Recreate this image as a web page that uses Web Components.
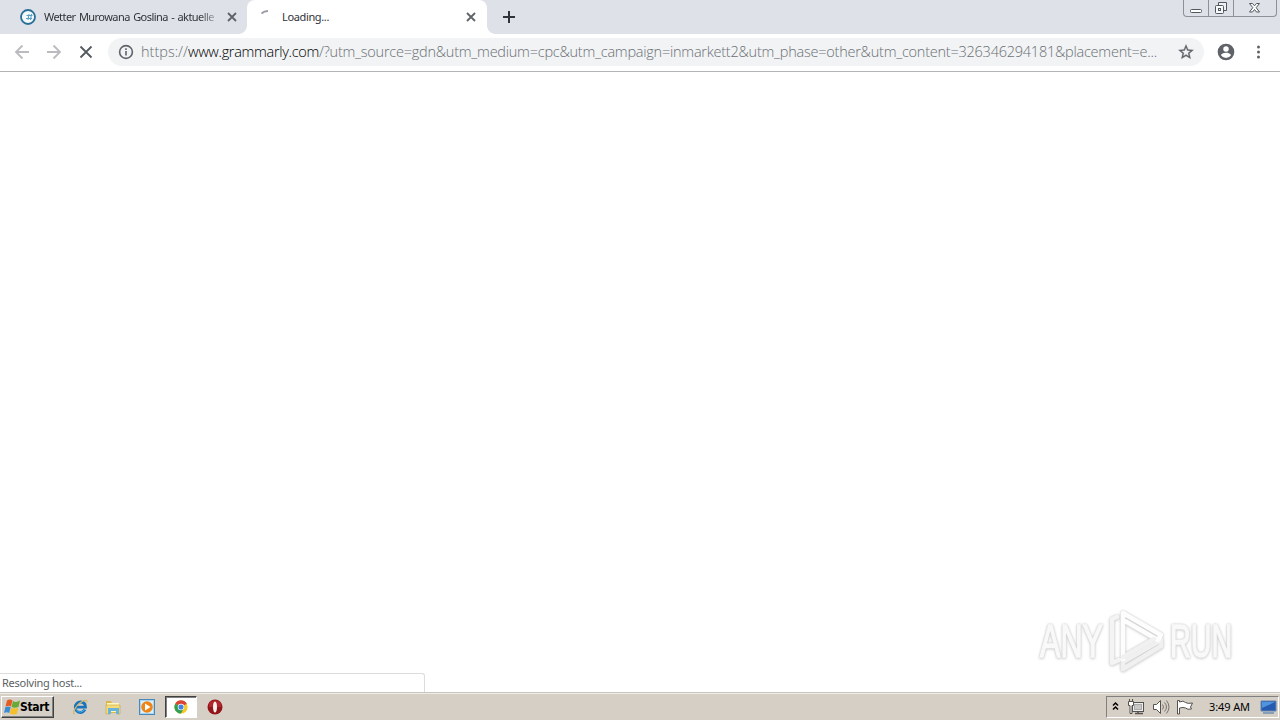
<!DOCTYPE html>
<html lang="en">
<head>
<meta charset="utf-8">
<title>Loading...</title>
<style>
    html, body {
        margin: 0;
        height: 100%;
        overflow: hidden;
        background: #fff;
        font-family: "Noto Sans", "DejaVu Sans Condensed", sans-serif;
    }
</style>
</head>
<body>
<desktop-screen>
    <tab-strip slot="browser"></tab-strip>
    <tool-bar slot="browser"></tool-bar>
    <page-view slot="browser"></page-view>
    <task-bar slot="taskbar"></task-bar>
</desktop-screen>

<script>
// small helper: every element gets an open shadow root with its own markup
class BaseElement extends HTMLElement {
    constructor() {
        super();
        this.attachShadow({ mode: 'open' });
        this.shadowRoot.innerHTML = this.render();
    }
}

// one line of text, spaced so that it takes exactly `width` pixels
class FitText extends BaseElement {
    render() {
        return `
            <style>
                :host { display: block; flex: none; white-space: nowrap; }
                span { display: block; width: max-content; }
            </style>
            <span><slot></slot></span>
        `;
    }

    connectedCallback() {
        const width = Number(this.getAttribute('width'));
        const span = this.shadowRoot.querySelector('span');
        const natural = span.getBoundingClientRect().width;
        this.style.width = width + 'px';
        span.style.letterSpacing = (width - natural) / this.textContent.length + 'px';
    }
}

class DesktopScreen extends BaseElement {
    render() {
        return `
            <style>
                :host { display: flex; flex-direction: column; width: 1280px; height: 720px; }
                main { display: flex; flex-direction: column; flex: 1; min-height: 0; }
            </style>
            <main><slot name="browser"></slot></main>
            <slot name="taskbar"></slot>
        `;
    }
}

class BrowserTab extends BaseElement {
    render() {
        return `
            <style>
                :host {
                    display: flex;
                    align-items: center;
                    box-sizing: border-box;
                    width: 240px;
                    height: 34px;
                    padding: 0 9px 0 13px;
                    font-size: 11px;
                    word-spacing: 1px;
                    color: #303338;
                }
                :host([active]) {
                    position: relative;
                    padding-right: 10px;
                    background: #fff;
                    border-radius: 8px 8px 0 0;
                }
                :host([active])::before, :host([active])::after {
                    content: "";
                    position: absolute;
                    bottom: 0;
                    width: 8px;
                    height: 8px;
                }
                :host([active])::before {
                    left: -8px;
                    background: radial-gradient(circle at 0 0, transparent 7.5px, #fff 8px);
                }
                :host([active])::after {
                    right: -8px;
                    background: radial-gradient(circle at 100% 0, transparent 7.5px, #fff 8px);
                }
                .icon { display: flex; width: 16px; height: 16px; margin-right: 8px; }
                :host([active]) .icon { margin-right: 6px; }
                .title { flex: 1; overflow: hidden; line-height: 16px; }
                :host(:not([active])) .title { -webkit-mask: linear-gradient(90deg, #000 155px, transparent 178px); }
                svg { display: block; flex: none; }
            </style>
            <div class="icon"><slot name="icon"></slot></div>
            <div class="title"><slot></slot></div>
            <svg width="12" height="12" viewBox="0 0 12 12"><path d="M2 2l8 8M10 2l-8 8" stroke="#5f6368" stroke-width="1.8"/></svg>
        `;
    }
}

class WindowButtons extends BaseElement {
    render() {
        return `
            <style>
                :host {
                    display: flex;
                    box-sizing: border-box;
                    width: 94px;
                    height: 17px;
                    margin-right: 3px;
                    border: 1px solid #8c9097;
                    border-top: 0;
                    border-radius: 0 0 4px 4px;
                }
                svg { display: block; }
            </style>
            <svg width="92" height="16" viewBox="0 0 92 16" fill="none" stroke="#53575e">
                <path d="M24.5 0v16M49.5 0v16" stroke="#8c9097"/>
                <rect x="6.5" y="9.5" width="11" height="3" rx="1" fill="#fff"/>
                <path d="M34.5 5V2.5h8v8h-2.5" fill="#eef0f3"/>
                <rect x="31.5" y="5.5" width="8" height="8" rx="1" fill="#f7f8fa"/>
                <rect x="34.5" y="8.5" width="2" height="2"/>
                <path d="M65.5 3.5h3l2 2.3 2-2.3h3l-3.3 4.2 3.3 4.3h-3l-2-2.5-2 2.5h-3l3.3-4.3z" fill="#fff"/>
            </svg>
        `;
    }
}

class TabStrip extends BaseElement {
    render() {
        return `
            <style>
                :host { display: flex; height: 34px; background: #dee1e7; }
                .tabs { display: flex; flex: 1; padding-left: 7px; }
                .new { margin: 10px 0 0 15px; }
                svg { display: block; }
            </style>
            <div class="tabs">
                <browser-tab>
                    <svg slot="icon" width="16" height="16" viewBox="0 0 16 16" fill="none">
                        <circle cx="8" cy="8" r="7" fill="#f3f8fb" stroke="#286f98" stroke-width="1.8"/>
                        <path d="M6.5 6.5h6M6 9.5h6M9 5l-1 6M11.5 5l-1 6" stroke="#579fc0"/>
                    </svg>
                    <fit-text width="170">Wetter Murowana Goslina - aktuelle</fit-text>
                </browser-tab>
                <browser-tab active>
                    <svg slot="icon" width="16" height="16" viewBox="0 0 16 16" fill="none">
                        <path d="M1.5 4.5Q4 2 8 2" stroke="#999da1" stroke-width="1.8"/>
                    </svg>
                    <fit-text width="47">Loading...</fit-text>
                </browser-tab>
                <svg class="new" width="14" height="14" viewBox="0 0 14 14"><path d="M7 1v12M1 7h12" stroke="#30343a" stroke-width="2"/></svg>
            </div>
            <window-buttons></window-buttons>
        `;
    }
}

class ToolBar extends BaseElement {
    render() {
        return `
            <style>
                :host {
                    display: flex;
                    align-items: center;
                    box-sizing: border-box;
                    height: 38px;
                    padding: 0 12px 1px 12px;
                    border-bottom: 1px solid #b3b4b5;
                    background: #fff;
                }
                svg { display: block; flex: none; }
                .nav { display: flex; gap: 12px; margin-right: 12px; }
                .omnibox {
                    display: flex;
                    align-items: center;
                    box-sizing: border-box;
                    width: 1096px;
                    height: 28px;
                    padding: 0 9px 0 9px;
                    border-radius: 14px;
                    background: #f1f3f4;
                }
                .url {
                    display: flex;
                    flex: 1;
                    margin-left: 6px;
                    font: 300 14.5px/22px "Open Sans", "Noto Sans", sans-serif;
                    color: #6b6f74;
                }
                .host { color: #000; }
                .user { margin-left: 12px; }
                .menu { margin-left: 14px; }
            </style>
            <div class="nav">
                <svg width="20" height="20" viewBox="0 0 20 20" fill="none" stroke="#b9bbbe" stroke-width="1.8"><path d="M17 10H4M10.5 3.5L4 10l6.5 6.5"/></svg>
                <svg width="20" height="20" viewBox="0 0 20 20" fill="none" stroke="#b9bbbe" stroke-width="1.8"><path d="M3 10h13M9.5 3.5L16 10l-6.5 6.5"/></svg>
                <svg width="20" height="20" viewBox="0 0 20 20" fill="none" stroke="#55595e" stroke-width="1.8"><path d="M4.5 4.5l11 11M15.5 4.5l-11 11"/></svg>
            </div>
            <div class="omnibox">
                <svg width="18" height="18" viewBox="0 0 18 18" fill="none" stroke="#5f6368" stroke-width="1.6"><circle cx="9" cy="9" r="6.4"/><path d="M9 8v4.5M9 5.3v1.7"/></svg>
                <div class="url">
                    <fit-text width="47">https://</fit-text>
                    <fit-text class="host" width="131">www.grammarly.com</fit-text>
                    <fit-text width="838">/?utm_source=gdn&amp;utm_medium=cpc&amp;utm_campaign=inmarkett2&amp;utm_phase=other&amp;utm_content=326346294181&amp;placement=e...</fit-text>
                </div>
                <svg width="18" height="18" viewBox="0 0 24 24" fill="#5f6368" stroke="#5f6368" stroke-width=".4"><path d="M22 9.24l-7.19-.62L12 2 9.19 8.63 2 9.24l5.46 4.73L5.82 21 12 17.27 18.18 21l-1.63-7.03L22 9.24zM12 15.4l-3.76 2.27 1-4.28-3.32-2.88 4.38-.38L12 6.1l1.71 4.04 4.38.38-3.32 2.88 1 4.28L12 15.4z"/></svg>
            </div>
            <svg class="user" width="20" height="20" viewBox="0 0 24 24" fill="#5f6368"><path d="M12 2a10 10 0 100 20 10 10 0 000-20zm0 3a3.3 3.3 0 110 6.6A3.3 3.3 0 0112 5zm0 14.2a7.2 7.2 0 01-6-3.22c.03-1.99 4-3.08 6-3.08s5.97 1.09 6 3.08a7.2 7.2 0 01-6 3.22z"/></svg>
            <svg class="menu" width="18" height="18" viewBox="0 0 18 18" fill="#5f6368"><circle cx="8.5" cy="4" r="1.5"/><circle cx="8.5" cy="9" r="1.5"/><circle cx="8.5" cy="14" r="1.5"/></svg>
        `;
    }
}

class AnyRunMark extends BaseElement {
    render() {
        return `
            <style>
                :host {
                    display: flex;
                    align-items: center;
                    font: 400 47px/64px "Liberation Sans", sans-serif;
                    color: #f9f9f9;
                    -webkit-text-stroke: 1.5px #f9f9f9;
                    filter: drop-shadow(0 0 1px #ccc) drop-shadow(0 1px 1px #ddd);
                }
                .word { width: 64px; height: 64px; }
                .word span { display: block; width: max-content; transform-origin: 0 50%; }
                .any span { transform: scaleX(.65); }
                .run span { transform: scaleX(.61); }
                svg { display: block; margin: 0 2px 2px 4px; }
            </style>
            <div class="word any"><span>ANY</span></div>
            <svg width="60" height="64" viewBox="0 0 60 64" fill="none" stroke-width="4.5" stroke-linejoin="round" stroke-linecap="round">
                <path d="M9 9L4 11v44l7-3" stroke="#f4f4f4"/>
                <path d="M15 61l38-23v-6L15 54z" stroke="#f0f0f0"/>
                <path d="M15 51V5l38 22-3 5-33-19" stroke="#fdfdfd"/>
                <path d="M15 49l31-18" stroke="#f1f1f1"/>
            </svg>
            <div class="word run"><span>RUN</span></div>
        `;
    }
}

class PageView extends BaseElement {
    render() {
        return `
            <style>
                :host {
                    display: flex;
                    flex: 1;
                    align-items: flex-end;
                    justify-content: space-between;
                    background: #fff;
                }
                .status {
                    box-sizing: border-box;
                    width: 425px;
                    height: 19px;
                    padding-left: 2px;
                    border: solid #dcdcdc;
                    border-width: 1px 1px 0 0;
                    border-radius: 0 3px 0 0;
                    font-size: 11px;
                    line-height: 18px;
                    color: #5c5f63;
                }
                any-run-mark { margin: 0 46px 18px 0; }
            </style>
            <div class="status"><fit-text width="80">Resolving host...</fit-text></div>
            <any-run-mark></any-run-mark>
        `;
    }
}

class StartButton extends BaseElement {
    render() {
        return `
            <style>
                :host {
                    display: flex;
                    align-items: center;
                    box-sizing: border-box;
                    width: 53px;
                    height: 22px;
                    padding-left: 2px;
                    border: 1px solid;
                    border-color: #fff #404040 #404040 #fff;
                    box-shadow: inset -1px -1px #808080;
                    font: 700 12px/18px "DejaVu Sans Condensed", "DejaVu Sans", sans-serif;
                    color: #000;
                }
                svg { display: block; }
            </style>
            <svg width="16" height="16" viewBox="0 0 16 16">
                <path d="M3 1.5Q6 -.5 8.5 1.5L7 7.5Q4.5 6 1.5 7.5z" fill="#e55b25"/>
                <path d="M9 2Q12 4 16 1.5L14.5 8Q10.5 9.5 7.5 8z" fill="#69aa36"/>
                <path d="M1.3 8.2Q4 6.8 6.7 8.2L5.2 14Q2.5 12.5 0 14z" fill="#3d8bd5"/>
                <path d="M7.3 8.7Q10 10.2 14.2 9L12.8 15Q9 16.2 5.8 14.5z" fill="#f5bf27"/>
            </svg>
            <fit-text width="29">Start</fit-text>
        `;
    }
}

class QuickLaunch extends BaseElement {
    render() {
        return `
            <style>
                :host { display: flex; align-items: center; gap: 2px; }
                div { display: flex; align-items: center; justify-content: center; box-sizing: border-box; width: 32px; height: 22px; }
                .active {
                    border: 1px solid;
                    border-color: #404040 #fff #fff #404040;
                    box-shadow: inset 1px 1px #808080;
                    background: #fff;
                }
                svg { display: block; }
            </style>
            <div><svg width="18" height="18" viewBox="0 0 18 18" fill="none">
                <path d="M15 11.5Q13 14.5 10.5 14.5A5.2 5.2 0 1110.5 4q5 0 5 5.2H6.5" stroke="#1974bd" stroke-width="2.8"/>
                <path d="M15 11Q13 14 10.5 14A4.8 4.8 0 015.5 9" stroke="#45b5ea"/>
                <path d="M5 16C1 16 6 6.5 13 3q4.5-2 4 1.5" stroke="#d3b866" stroke-width="1.2"/>
            </svg></div>
            <div><svg width="18" height="18" viewBox="0 0 18 18">
                <path d="M2 3h5l1 2h7v10H2z" fill="#d8b84c"/>
                <path d="M3 5h12v9H3z" fill="#fff6ba"/>
                <path d="M2 7h14v9h-3v-4H6v4H2z" fill="#f3db78" stroke="#c4a446" stroke-width=".6"/>
                <path d="M4 10h11v6h-3v-3H7v3H4z" fill="#67b3d9"/>
            </svg></div>
            <div><svg width="18" height="18" viewBox="0 0 18 18">
                <rect x="1.5" y="1.5" width="15" height="15" fill="#a9d5f2" stroke="#4789b8"/>
                <path d="M3 3h12v12H3z" fill="#dceffa"/>
                <circle cx="9" cy="9" r="5.8" fill="#ed8518"/>
                <path d="M7 5.5v7l5.5-3.5z" fill="#fff"/>
            </svg></div>
            <div class="active"><svg width="14" height="14" viewBox="0 0 18 18">
                <circle cx="9" cy="9" r="8.5" fill="#f6c927"/>
                <path d="M9 9L1.6 4.8A8.5 8.5 0 0116.4 4.8z" fill="#d94436"/>
                <path d="M1.6 4.8A8.5 8.5 0 009 17.5L12.5 11 9 9z" fill="#319e55"/>
                <circle cx="9" cy="9" r="4.2" fill="#fff"/><circle cx="9" cy="9" r="3.3" fill="#4283de"/>
            </svg></div>
            <div><svg width="16" height="16" viewBox="0 0 16 16">
                <circle cx="8" cy="8" r="7.5" fill="#93151a"/>
                <path d="M2 5a7 7 0 0112 0v3H2z" fill="#b3262c"/>
                <ellipse cx="8" cy="8" rx="2" ry="5.5" fill="#f7f3ef"/>
            </svg></div>
        `;
    }
}

class SystemTray extends BaseElement {
    render() {
        return `
            <style>
                :host {
                    display: flex;
                    align-items: center;
                    box-sizing: border-box;
                    width: 173px;
                    height: 22px;
                    padding-left: 4px;
                    border: 1px solid;
                    border-color: #808080 #fff #fff #808080;
                    font-size: 11px;
                    line-height: 16px;
                    color: #000;
                }
                svg { display: block; flex: none; }
                .time { margin: 0 9px 0 8px; }
            </style>
            <svg width="90" height="18" viewBox="0 0 90 18" fill="none" stroke="#55524e">
                <path d="M2 7.5L4.5 5 7 7.5M2 11.5L4.5 9 7 11.5" stroke="#000" stroke-width="1.5"/>
                <rect x="21.5" y="4.5" width="11" height="9" fill="#eee"/><rect x="23.5" y="6.5" width="7" height="5" fill="#c9c7c3" stroke="#aaa"/>
                <path d="M24 15.5h8M27 13.5v2" stroke-width="1.5"/>
                <path d="M18.5 1v3M21.5 1v3"/><path d="M17.5 3.5h5v4h-1.5v8h-2v-8h-1.5z" fill="#fff"/>
                <path d="M42.5 6.5h3l4-4v13l-4-4h-3z" fill="#fff"/>
                <path d="M51.5 6.5q2 2.5 0 5M53.5 4.5q4 4.5 0 9M55.5 2.5q5 6.5 0 13" stroke="#77736e"/>
                <path d="M66.5 16V2.5h2V4q4-2 6 .5 2 1.5 7 .5l-2 4 1 2q-4 1-6-1-2-1-6 0v6z" fill="#fff"/>
            </svg>
            <fit-text class="time" width="41">3:49 AM</fit-text>
            <svg width="18" height="16" viewBox="0 0 18 16">
                <path d="M2 2h15v10H2z" fill="#245bb1" stroke="#6785ac"/>
                <path d="M3 3h13L3 9z" fill="#4f94de"/><path d="M4 13h11v2H4z" fill="#879eb8"/>
            </svg>
        `;
    }
}

class TaskBar extends BaseElement {
    render() {
        return `
            <style>
                :host {
                    display: flex;
                    align-items: center;
                    box-sizing: border-box;
                    height: 28px;
                    padding: 1px 1px 0 1px;
                    border-top: 1px solid #c9c5bd;
                    box-shadow: inset 0 1px #efede9;
                    background: #d6cfc6;
                }
                quick-launch { margin-left: 9px; }
                system-tray { margin-left: auto; }
            </style>
            <start-button></start-button>
            <quick-launch></quick-launch>
            <system-tray></system-tray>
        `;
    }
}

customElements.define('fit-text', FitText);
customElements.define('window-buttons', WindowButtons);
customElements.define('browser-tab', BrowserTab);
customElements.define('tab-strip', TabStrip);
customElements.define('tool-bar', ToolBar);
customElements.define('any-run-mark', AnyRunMark);
customElements.define('page-view', PageView);
customElements.define('start-button', StartButton);
customElements.define('quick-launch', QuickLaunch);
customElements.define('system-tray', SystemTray);
customElements.define('task-bar', TaskBar);
customElements.define('desktop-screen', DesktopScreen);
</script>
</body>
</html>
